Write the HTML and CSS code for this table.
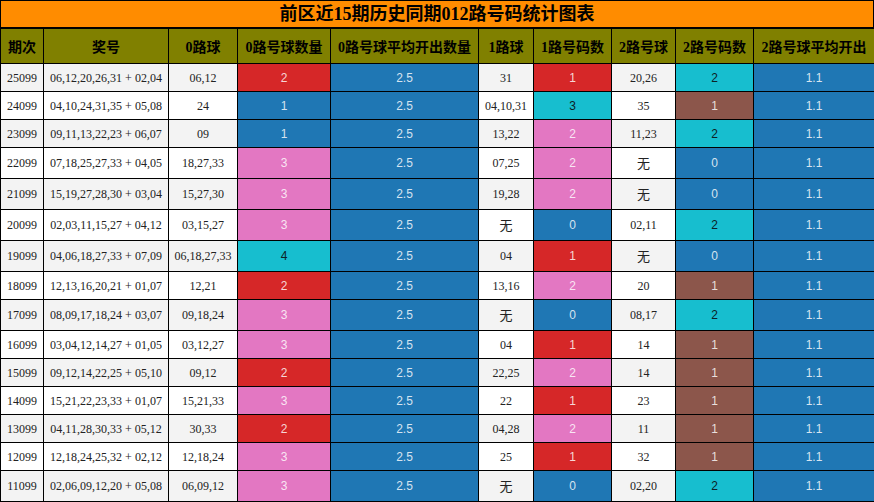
FILE: index.html
```html
<!DOCTYPE html>
<html lang="zh">
<head>
<meta charset="utf-8">
<title>前区近15期历史同期012路号码统计图表</title>
<link rel="stylesheet" href="styles.css">
</head>
<body>
<div class="chart">
  <div class="title">前区近15期历史同期012路号码统计图表</div>
  <table class="grid">
    <colgroup>
      <col class="c1"><col class="c2"><col class="c3"><col class="c4"><col class="c5">
      <col class="c6"><col class="c7"><col class="c8"><col class="c9"><col class="c10">
    </colgroup>
    <thead>
      <tr>
        <th>期次</th><th>奖号</th><th>0路球</th><th>0路号球数量</th><th>0路号球平均开出数量</th>
        <th>1路球</th><th>1路号码数</th><th>2路号球</th><th>2路号码数</th><th>2路号球平均开出</th>
      </tr>
    </thead>
    <tbody>
      <tr class="alt"><td>25099</td><td>06,12,20,26,31 + 02,04</td><td>06,12</td><td class="v red">2</td><td class="v blue">2.5</td><td>31</td><td class="v red">1</td><td>20,26</td><td class="v cyan">2</td><td class="v blue">1.1</td></tr>
      <tr><td>24099</td><td>04,10,24,31,35 + 05,08</td><td>24</td><td class="v blue">1</td><td class="v blue">2.5</td><td>04,10,31</td><td class="v cyan">3</td><td>35</td><td class="v brown">1</td><td class="v blue">1.1</td></tr>
      <tr class="alt"><td>23099</td><td>09,11,13,22,23 + 06,07</td><td>09</td><td class="v blue">1</td><td class="v blue">2.5</td><td>13,22</td><td class="v pink">2</td><td>11,23</td><td class="v cyan">2</td><td class="v blue">1.1</td></tr>
      <tr class="tall"><td>22099</td><td>07,18,25,27,33 + 04,05</td><td>18,27,33</td><td class="v pink">3</td><td class="v blue">2.5</td><td>07,25</td><td class="v pink">2</td><td class="none">无</td><td class="v blue">0</td><td class="v blue">1.1</td></tr>
      <tr class="alt tall"><td>21099</td><td>15,19,27,28,30 + 03,04</td><td>15,27,30</td><td class="v pink">3</td><td class="v blue">2.5</td><td>19,28</td><td class="v pink">2</td><td class="none">无</td><td class="v blue">0</td><td class="v blue">1.1</td></tr>
      <tr class="tall"><td>20099</td><td>02,03,11,15,27 + 04,12</td><td>03,15,27</td><td class="v pink">3</td><td class="v blue">2.5</td><td class="none">无</td><td class="v blue">0</td><td>02,11</td><td class="v cyan">2</td><td class="v blue">1.1</td></tr>
      <tr class="alt tall"><td>19099</td><td>04,06,18,27,33 + 07,09</td><td>06,18,27,33</td><td class="v cyan">4</td><td class="v blue">2.5</td><td>04</td><td class="v red">1</td><td class="none">无</td><td class="v blue">0</td><td class="v blue">1.1</td></tr>
      <tr><td>18099</td><td>12,13,16,20,21 + 01,07</td><td>12,21</td><td class="v red">2</td><td class="v blue">2.5</td><td>13,16</td><td class="v pink">2</td><td>20</td><td class="v brown">1</td><td class="v blue">1.1</td></tr>
      <tr class="alt tall"><td>17099</td><td>08,09,17,18,24 + 03,07</td><td>09,18,24</td><td class="v pink">3</td><td class="v blue">2.5</td><td class="none">无</td><td class="v blue">0</td><td>08,17</td><td class="v cyan">2</td><td class="v blue">1.1</td></tr>
      <tr><td>16099</td><td>03,04,12,14,27 + 01,05</td><td>03,12,27</td><td class="v pink">3</td><td class="v blue">2.5</td><td>04</td><td class="v red">1</td><td>14</td><td class="v brown">1</td><td class="v blue">1.1</td></tr>
      <tr class="alt"><td>15099</td><td>09,12,14,22,25 + 05,10</td><td>09,12</td><td class="v red">2</td><td class="v blue">2.5</td><td>22,25</td><td class="v pink">2</td><td>14</td><td class="v brown">1</td><td class="v blue">1.1</td></tr>
      <tr><td>14099</td><td>15,21,22,23,33 + 01,07</td><td>15,21,33</td><td class="v pink">3</td><td class="v blue">2.5</td><td>22</td><td class="v red">1</td><td>23</td><td class="v brown">1</td><td class="v blue">1.1</td></tr>
      <tr class="alt"><td>13099</td><td>04,11,28,30,33 + 05,12</td><td>30,33</td><td class="v red">2</td><td class="v blue">2.5</td><td>04,28</td><td class="v pink">2</td><td>11</td><td class="v brown">1</td><td class="v blue">1.1</td></tr>
      <tr><td>12099</td><td>12,18,24,25,32 + 02,12</td><td>12,18,24</td><td class="v pink">3</td><td class="v blue">2.5</td><td>25</td><td class="v red">1</td><td>32</td><td class="v brown">1</td><td class="v blue">1.1</td></tr>
      <tr class="alt tall"><td>11099</td><td>02,06,09,12,20 + 05,08</td><td>06,09,12</td><td class="v pink">3</td><td class="v blue">2.5</td><td class="none">无</td><td class="v blue">0</td><td>02,20</td><td class="v cyan">2</td><td class="v blue">1.1</td></tr>
    </tbody>
  </table>
</div>
</body>
</html>
```

FILE: styles.css
```css
html, body {
  margin: 0;
  padding: 0;
  background: #ffffff;
}

.chart {
  width: 874px;
  font-family: "Liberation Serif", "Noto Sans CJK SC", serif;
  color: #222222;
}

.title {
  box-sizing: border-box;
  height: 28px;
  border: 1px solid #000000;
  background: #ff8c00;
  color: #000000;
  font-size: 18px;
  font-weight: bold;
  line-height: 26px;
  text-align: center;
}

.grid {
  width: 874px;
  border-collapse: collapse;
  table-layout: fixed;
  font-size: 12px;
}

.c1 { width: 43px; }
.c2 { width: 125px; }
.c3 { width: 69px; }
.c4 { width: 93px; }
.c5 { width: 148px; }
.c6 { width: 55px; }
.c7 { width: 78px; }
.c8 { width: 64px; }
.c9 { width: 78px; }
.c10 { width: 121px; }

.grid th,
.grid td {
  border: 1px solid #000000;
  padding: 0;
  text-align: center;
  vertical-align: middle;
  white-space: nowrap;
}

.grid th {
  height: 34px;
  background: #808000;
  color: #000000;
  font-size: 14px;
  font-weight: bold;
}

.grid td {
  height: 27px;
  background: #ffffff;
  line-height: 14px;
}

.grid tr.tall td {
  height: 30px;
}

.grid tr.alt td {
  background: #f3f3f3;
}

.grid td.none {
  font-family: "Noto Sans CJK SC", sans-serif;
  font-size: 13px;
  color: #222222;
}

.grid td.v {
  font-family: "Liberation Sans", "Noto Sans", sans-serif;
  font-size: 12px;
  color: rgba(255, 255, 255, 0.82);
}

.grid tr td.red { background: #d62728; }
.grid tr td.blue { background: #1f77b4; }
.grid tr td.pink { background: #e377c2; }
.grid tr td.cyan { background: #17becf; color: #0d2226; }
.grid tr td.brown { background: #8c564b; }
```
